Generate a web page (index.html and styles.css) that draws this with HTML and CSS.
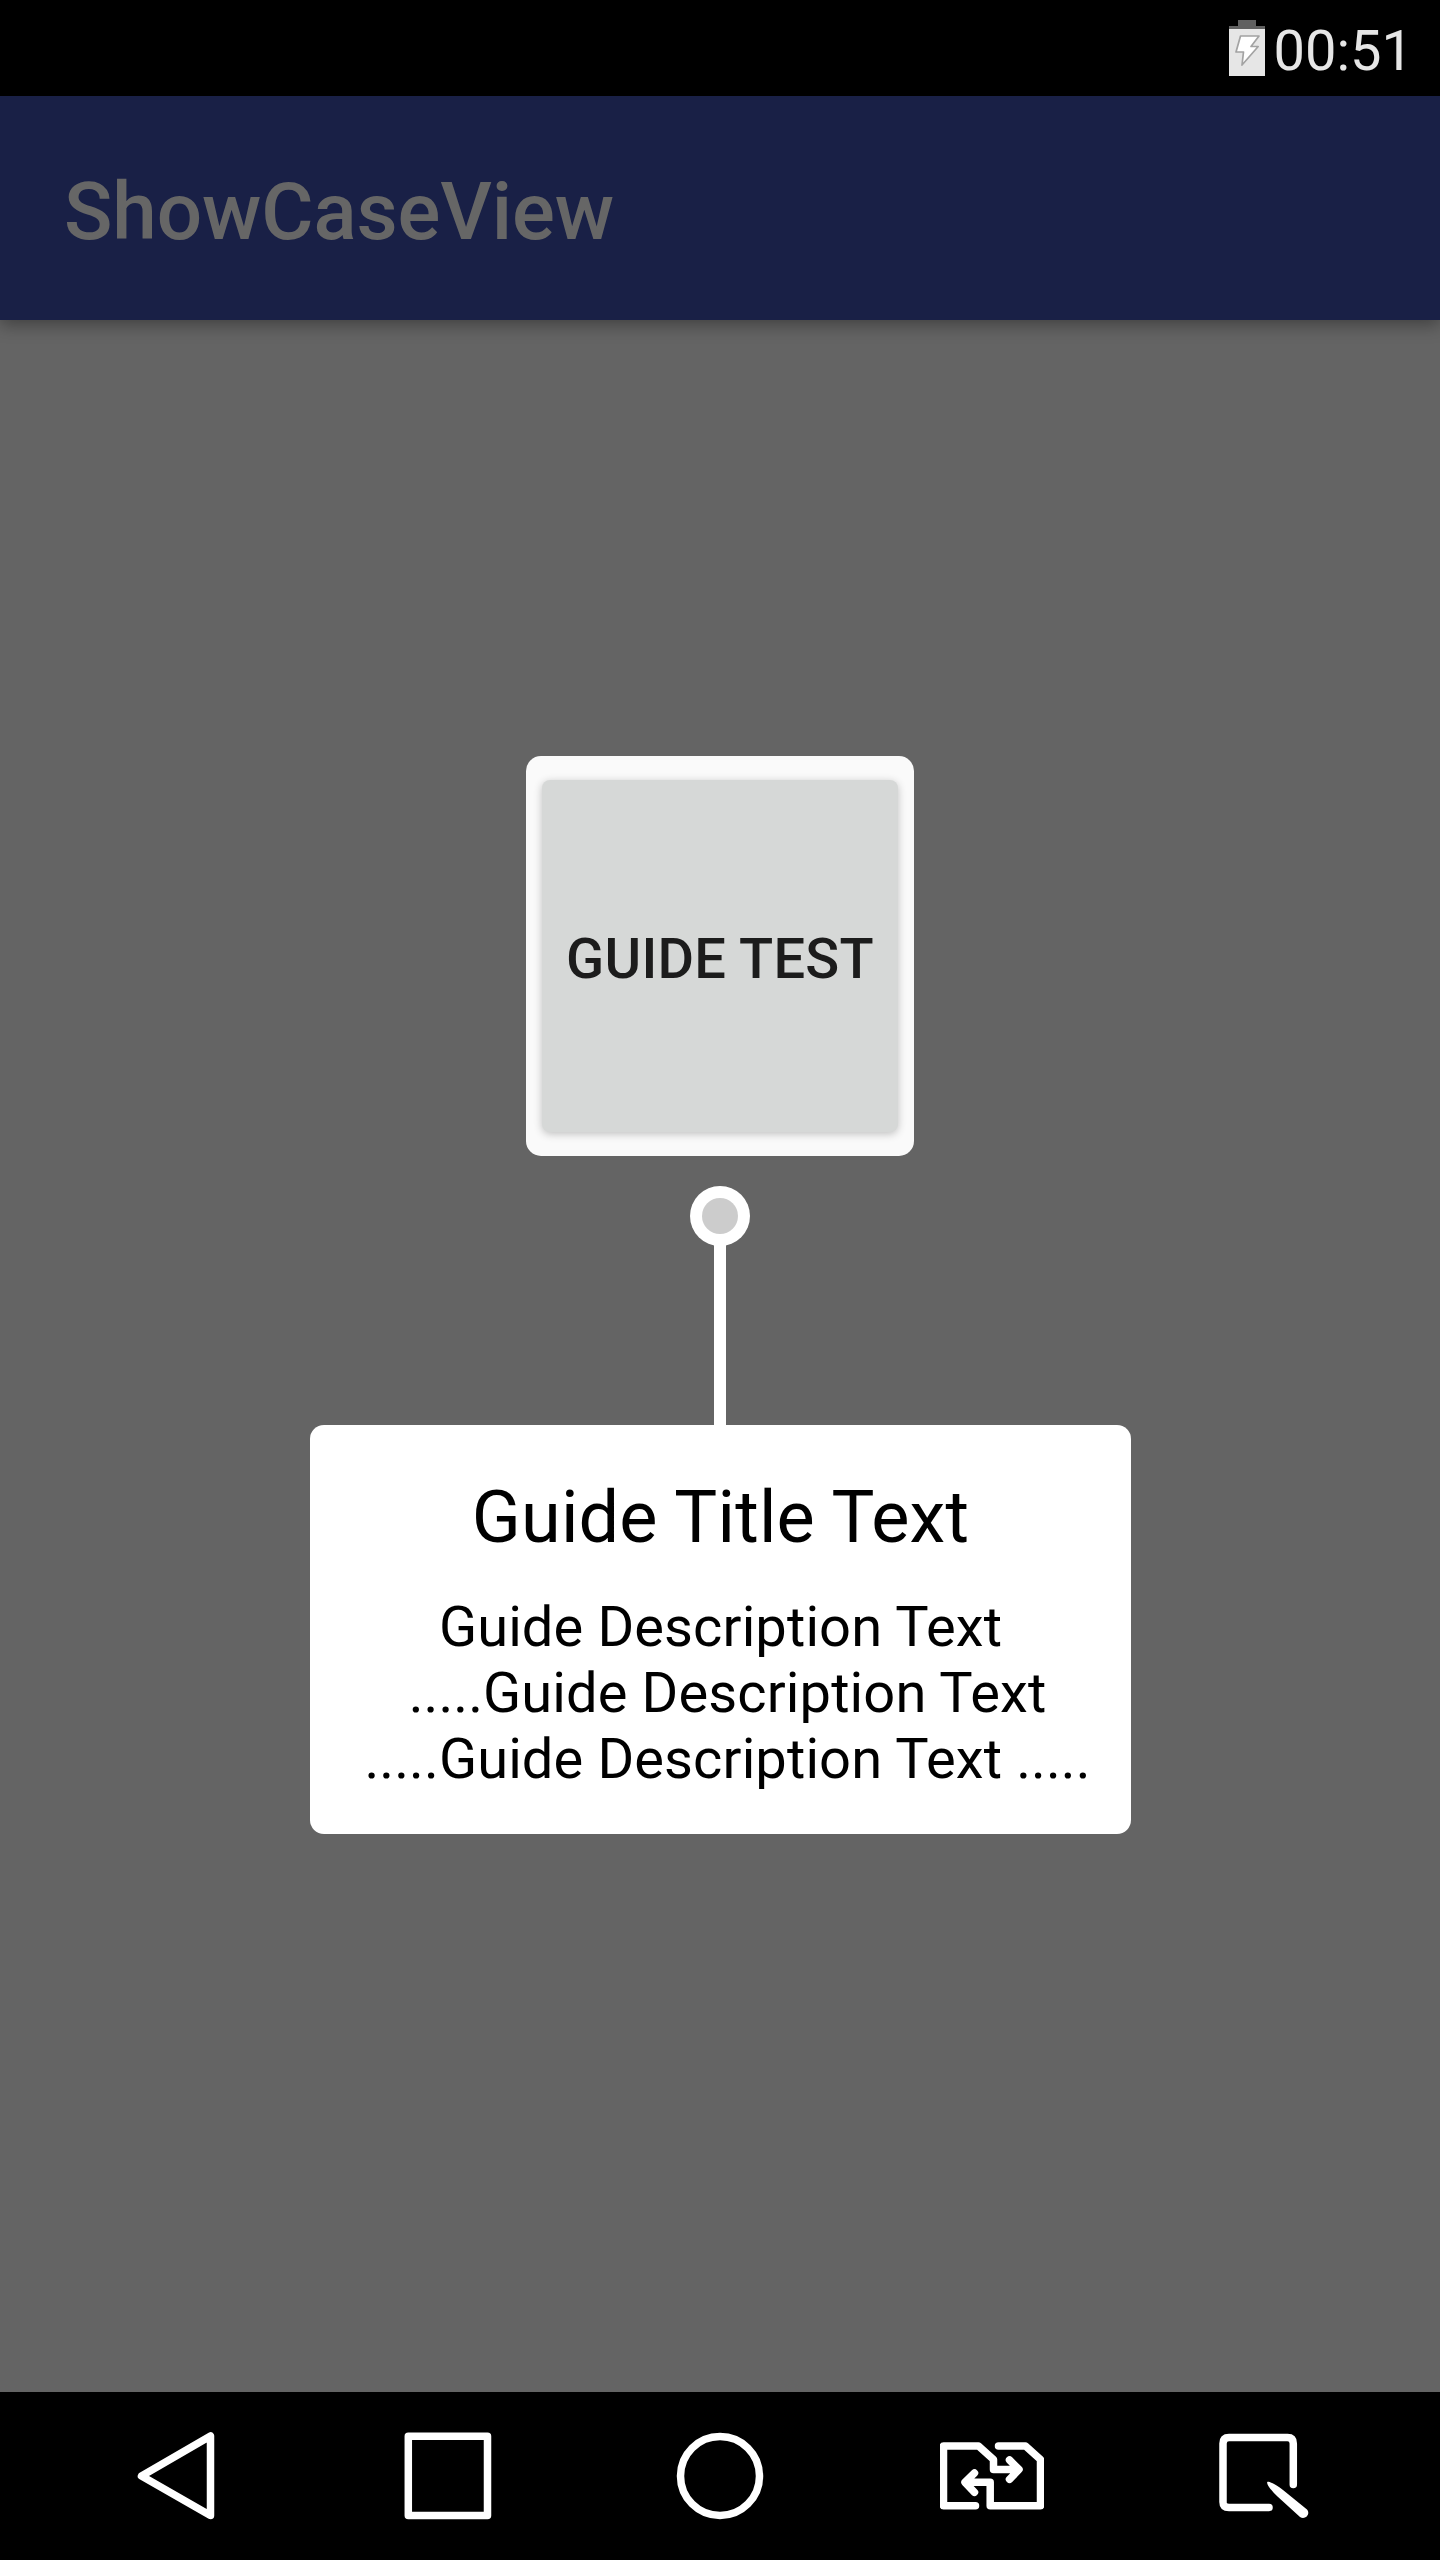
FILE: index.html
```html
<!DOCTYPE html>
<html lang="en">
<head>
<meta charset="utf-8">
<title>ShowCaseView</title>
<link rel="stylesheet" href="styles.css">
</head>
<body>
<div class="screen">
  <div class="status-bar">
    <svg class="battery" width="36" height="56" viewBox="0 0 36 56">
      <path d="M9 0h18v6h9v3H0V6h9z" fill="#606060"/>
      <path d="M0 9h36v47H0z" fill="#e6e6e6"/>
      <path d="M11.500 16H30l-8 10.500h7.200L13 45l1.500-13H7z" fill="#fff" stroke="#a3a3a3" stroke-width="1.700" stroke-linejoin="round"/>
    </svg>
    <span class="clock">00:51</span>
  </div>
  <header class="app-bar"><h1 class="app-title">ShowCaseView</h1></header>
  <main class="content">
    <div class="spotlight"><button class="guide-button">GUIDE TEST</button></div>
    <svg class="pointer" width="60" height="239" viewBox="0 0 60 239">
      <path d="M24 30h12v209H24z" fill="#fff"/>
      <circle cx="30" cy="30" r="30" fill="#fff"/>
      <circle cx="30" cy="30" r="18" fill="#ccc"/>
    </svg>
    <section class="guide-card">
      <h2 class="guide-title">Guide Title Text</h2>
      <p class="guide-text">Guide Description Text
 .....Guide Description Text
 .....Guide Description Text .....</p>
    </section>
  </main>
  <nav class="nav-bar">
    <svg class="nav-icon" viewBox="124 2424 104 104"><path d="M141.500 2476 210.500 2436V2515.500Z"/></svg>
    <svg class="nav-icon" viewBox="396 2424 104 104"><path d="M408.300 2436.200h79.200v79.300h-79.200z"/></svg>
    <svg class="nav-icon" viewBox="668 2424 104 104"><circle cx="720" cy="2476" r="39.500"/></svg>
    <svg class="nav-icon" viewBox="940 2424 104 104">
      <path d="M975.500 2505.700H943.500V2446H978.500L993.500 2459.500V2469.500H1018M1009.500 2460 1019 2469.500 1009.500 2479.300M998.500 2446H1025.500L1040.500 2459.500V2505.700H990.200V2482.300H966M974.500 2473 965 2482.300 974.500 2492.300"/>
      <path class="solid" d="M1011 2462l8 7.500-8 8zM973 2475l-8 7.500 8 8z"/>
    </svg>
    <svg class="nav-icon" viewBox="1212 2424 104 104">
      <path d="M1269 2507.500H1229Q1223 2507.500 1223 2502V2443.500Q1223 2437.500 1229 2437.500H1287.500Q1293.300 2437.500 1293.300 2443.500V2484.500"/>
      <path class="solid" d="M1267.300 2482C1268.500 2481 1276 2484.500 1283 2490L1307 2509.500C1311 2514 1305 2520.500 1300 2517L1277.500 2496.500C1272 2491.500 1266 2484 1267.300 2482Z"/>
    </svg>
  </nav>
</div>
</body>
</html>
```
FILE: styles.css
```css
* { box-sizing: border-box; }
body { margin: 0; font-family: Roboto, "Liberation Sans", sans-serif; }
.screen {
  display: flex;
  flex-direction: column;
  width: 1440px;
  height: 2560px;
  background: #646464;
}
.status-bar {
  display: flex;
  flex: none;
  justify-content: flex-end;
  align-items: flex-start;
  gap: 9px;
  height: 96px;
  padding: 20px 27px 0 0;
  background: #000;
}
.battery { display: block; }
.clock {
  font-size: 56px;
  line-height: 62px;
  color: #e6e6e6;
}
.app-bar {
  display: flex;
  flex: none;
  align-items: center;
  height: 224px;
  padding: 8px 64px 0;
  background: #192046;
  box-shadow: 0 5px 16px rgba(0, 0, 0, 0.35);
}
.app-title {
  margin: 0;
  font-size: 80px;
  font-weight: 500;
  line-height: 94px;
  letter-spacing: -0.1px;
  color: #666;
}
.content {
  display: flex;
  flex: 1;
  flex-direction: column;
  align-items: center;
  padding-top: 436px;
}
.spotlight {
  display: flex;
  width: 388px;
  height: 400px;
  padding: 24px 16px;
  border-radius: 15px;
  background: #fafafa;
}
.guide-button {
  flex: 1;
  padding: 5px 0 0;
  border: 0;
  border-radius: 8px;
  background: #d6d8d7;
  box-shadow: 0 2px 8px rgba(0, 0, 0, 0.24);
  font: 500 56px/66px Roboto, "Liberation Sans", sans-serif;
  letter-spacing: 0.25px;
  color: #1c1c1c;
  white-space: nowrap;
}
.pointer { display: block; margin-top: 30px; }
.guide-card {
  width: 821px;
  height: 409px;
  margin-left: 1px;
  padding: 51px 0 0;
  border-radius: 14px;
  background: #fff;
  text-align: center;
  color: #000;
}
.guide-title {
  margin: 0 0 34px;
  font-size: 72px;
  font-weight: 400;
  line-height: 84px;
  letter-spacing: 0.17px;
}
.guide-text {
  margin: 0;
  font-size: 56px;
  line-height: 66px;
  letter-spacing: 0.12px;
  white-space: pre;
}
.nav-bar {
  display: flex;
  flex: none;
  justify-content: space-between;
  align-items: center;
  height: 168px;
  padding: 0 124px;
  background: #000;
}
.nav-icon {
  width: 104px;
  height: 104px;
  fill: none;
  stroke: #fff;
  stroke-width: 7.500px;
  stroke-linecap: round;
  stroke-linejoin: round;
}
.nav-icon .solid { fill: #fff; stroke: none; }
```
